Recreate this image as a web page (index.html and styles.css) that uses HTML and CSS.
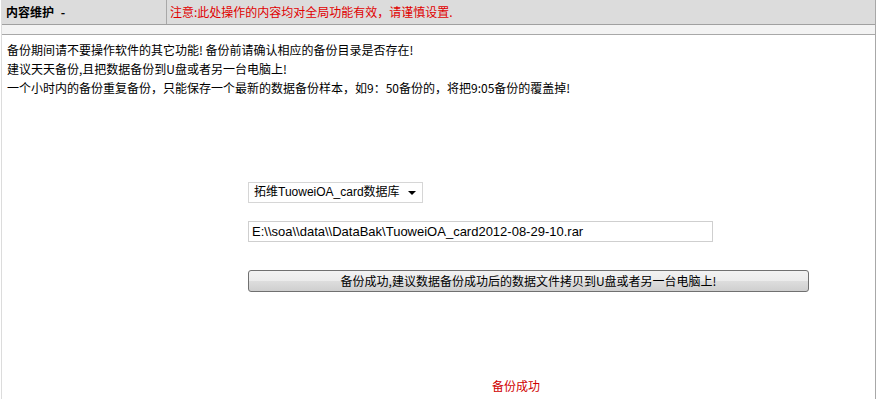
FILE: index.html
```html
<!DOCTYPE html>
<html lang="zh">
<head>
<meta charset="utf-8">
<title>内容维护</title>
<link rel="stylesheet" href="styles.css">
</head>
<body>
<div class="wrap">
  <div class="head">
    <div class="head-title">内容维护 -</div>
    <div class="head-note">注意:此处操作的内容均对全局功能有效，请谨慎设置.</div>
  </div>
  <div class="strip"></div>
  <div class="content">
    <div class="notes">
      <p>备份期间请不要操作软件的其它功能! 备份前请确认相应的备份目录是否存在!</p>
      <p>建议天天备份,且把数据备份到U盘或者另一台电脑上!</p>
      <p>一个小时内的备份重复备份，只能保存一个最新的数据备份样本，如9：50备份的，将把9:05备份的覆盖掉!</p>
    </div>
    <div class="form">
      <div class="select"><span class="select-text">拓维TuoweiOA_card数据库</span><span class="arrow"></span></div>
      <div class="input">E:\\soa\\data\\DataBak\TuoweiOA_card2012-08-29-10.rar</div>
      <div class="button">备份成功,建议数据备份成功后的数据文件拷贝到U盘或者另一台电脑上!</div>
      <div class="status">备份成功</div>
    </div>
  </div>
</div>
</body>
</html>
```

FILE: styles.css
```css
html, body {
  margin: 0;
  padding: 0;
  background: #ffffff;
}
body {
  font-family: "Noto Sans CJK SC", "Liberation Sans", sans-serif;
  font-size: 12px;
  color: #000;
}
.wrap {
  margin-left: 1px;
  width: 873px;
  height: 399px;
  border-left: 1px solid #dcdcdc;
  border-right: 1px solid #a8a8a8;
  box-sizing: content-box;
  overflow: hidden;
}
.head {
  display: flex;
  height: 24px;
  background: #dcdcdc;
  border-bottom: 1px solid #a0a0a0;
}
.head-title {
  width: 160px;
  padding-left: 4px;
  border-right: 1px solid #a8a8a8;
  font-weight: bold;
  line-height: 24px;
  word-spacing: 4px;
}
.head-note {
  padding-left: 3px;
  color: #e00000;
  line-height: 24px;
}
.strip {
  height: 9px;
  background: #f3f3f3;
  border-bottom: 1px solid #a8a8a8;
}
.content {
  padding: 5px 0 0 5px;
}
.notes p {
  margin: 0;
  line-height: 19px;
}
.form {
  display: flex;
  flex-direction: column;
  align-items: flex-start;
  margin-left: 241px;
  margin-top: 85px;
}
.select {
  display: flex;
  align-items: center;
  box-sizing: border-box;
  width: 175px;
  height: 21px;
  border: 1px solid #d6d6d6;
  padding-left: 5px;
  font-family: "Liberation Sans", "Noto Sans CJK SC", sans-serif;
  font-size: 12px;
  white-space: nowrap;
}
.select-text {
  flex: 1;
  line-height: 19px;
}
.arrow {
  flex: none;
  width: 0;
  height: 0;
  margin-right: 6px;
  margin-left: 4px;
  border-left: 4px solid transparent;
  border-right: 4px solid transparent;
  border-top: 4px solid #000;
}
.input {
  box-sizing: border-box;
  width: 465px;
  height: 21px;
  margin-top: 18px;
  border: 1px solid #cfcfcf;
  padding-left: 3px;
  line-height: 19px;
  font-family: "Liberation Sans", "Noto Sans CJK SC", sans-serif;
  font-size: 13px;
  white-space: nowrap;
}
.button {
  box-sizing: border-box;
  width: 561px;
  height: 22px;
  margin-top: 28px;
  border: 1px solid #707070;
  border-radius: 3px;
  background: linear-gradient(#f2f2f2 0%, #ebebeb 50%, #dddddd 51%, #cfcfcf 100%);
  text-align: center;
  line-height: 19px;
  font-size: 12px;
}
.status {
  margin-top: 84px;
  margin-left: 244px;
  color: #d00000;
  line-height: 19px;
}
```
